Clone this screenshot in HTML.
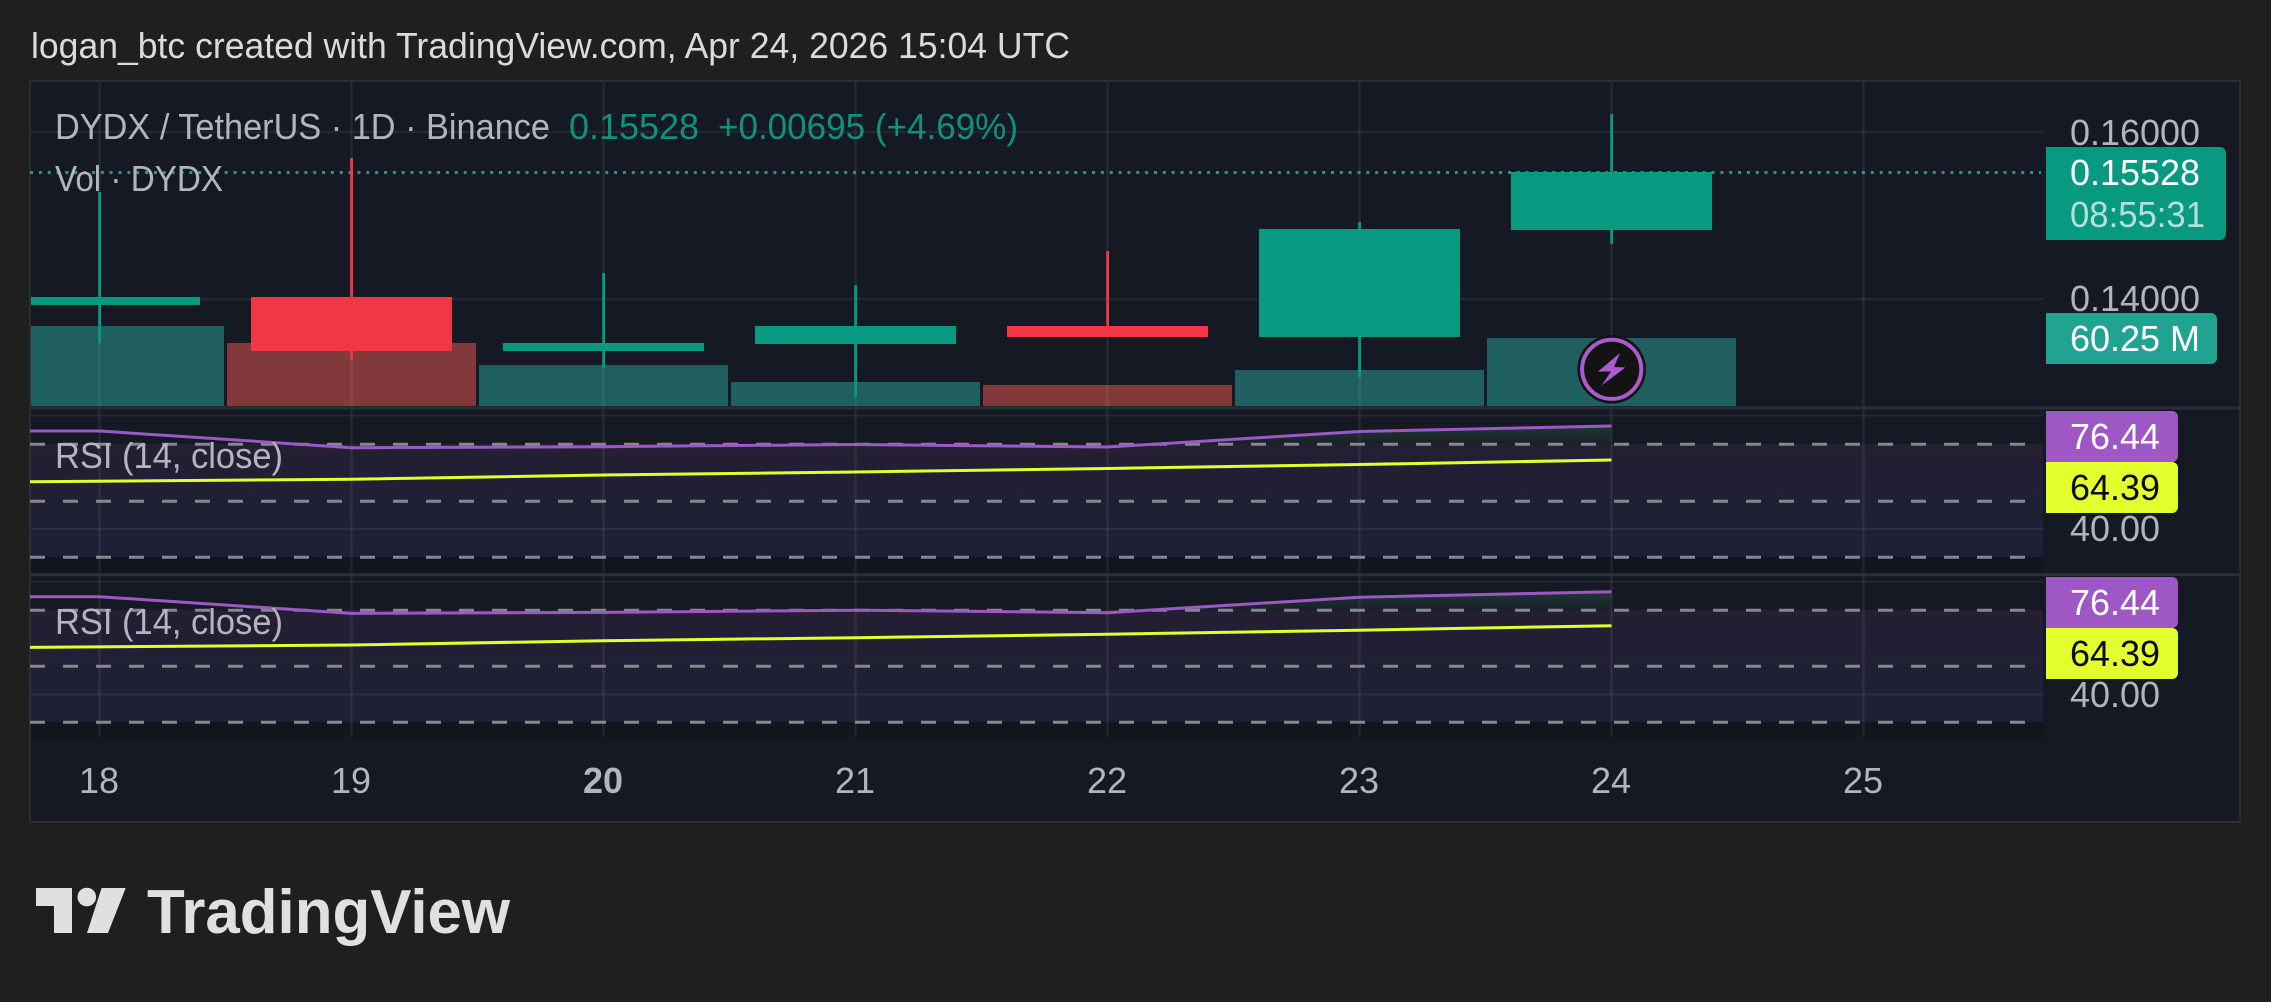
<!DOCTYPE html>
<html><head><meta charset="utf-8"><style>
html,body{margin:0;padding:0;background:#1f1f1f;width:2271px;height:1002px;overflow:hidden}
svg{display:block}
text{font-family:"Liberation Sans",sans-serif;font-size:36px}
</style></head><body>
<svg width="2271" height="1002" viewBox="0 0 2271 1002" xmlns="http://www.w3.org/2000/svg">
<defs>
<linearGradient id="band" x1="0" y1="0" x2="0" y2="1"><stop offset="0" stop-color="#241f33"/><stop offset="1" stop-color="#1d2035"/></linearGradient>
<linearGradient id="ob" x1="0" y1="0" x2="0" y2="1"><stop offset="0" stop-color="#26493f" stop-opacity=".6"/><stop offset="1" stop-color="#26493f" stop-opacity=".1"/></linearGradient>
<clipPath id="p1"><rect x="2040" y="410" width="200" height="60"/></clipPath>
<clipPath id="p2"><rect x="2040" y="576" width="200" height="60"/></clipPath>
</defs>
<rect width="2271" height="1002" fill="#1f1f1f"/>
<text x="31" y="58" fill="#dadbde" textLength="1039" lengthAdjust="spacingAndGlyphs">logan_btc created with TradingView.com, Apr 24, 2026 15:04 UTC</text>

<!-- chart -->
<rect x="30" y="81" width="2210" height="741" fill="#151923" stroke="#2b2d33" stroke-width="2"/>

<!-- rsi bands -->
<rect x="31" y="444" width="2012" height="113" fill="url(#band)"/>
<rect x="31" y="610" width="2012" height="112" fill="url(#band)"/>
<rect x="31" y="557" width="2012" height="17" fill="#12151e"/>
<rect x="31" y="722" width="2012" height="16" fill="#12151e"/>

<!-- volume -->
<g fill="#1f5f5f">
<rect x="31" y="326" width="193" height="80"/>
<rect x="479" y="365" width="249" height="41"/>
<rect x="731" y="382" width="249" height="24"/>
<rect x="1235" y="370" width="249" height="36"/>
<rect x="1487" y="338" width="249" height="68"/>
</g>
<g fill="#82393c">
<rect x="227" y="343" width="249" height="63"/>
<rect x="983" y="385" width="249" height="21"/>
</g>

<!-- horizontal grid -->
<g stroke="#fff" stroke-opacity=".06" stroke-width="2.5">
<path d="M31 132H2043M31 299H2043"/>
<path d="M31 415.5H2043M31 529H2043M31 581.5H2043M31 694.5H2043" stroke-width="2"/>
</g>
<!-- vertical grid -->
<g stroke="#fff" stroke-opacity=".07" stroke-width="2.4">
<path d="M99.5 82V737M351.5 82V737M603.5 82V737M855.5 82V737M1107.5 82V737M1359.5 82V737M1611.5 82V737M1863.5 82V737"/>
</g>

<!-- separators -->
<path d="M31 408H2240M31 574.5H2240" stroke="#2b2e38" stroke-width="3"/>

<!-- dotted price line -->
<path d="M30 172.5H2041" stroke="#1f9a86" stroke-width="3" stroke-dasharray="3 5.85"/>

<!-- candles -->
<g fill="#089981">
<rect x="98.2" y="192" width="2.8" height="151"/>
<rect x="31" y="297" width="169" height="8"/>
<rect x="602.2" y="273" width="2.8" height="95"/>
<rect x="503" y="343" width="201" height="8"/>
<rect x="854.2" y="285" width="2.8" height="112"/>
<rect x="755" y="326" width="201" height="18"/>
<rect x="1358.2" y="222" width="2.8" height="156"/>
<rect x="1259" y="229" width="201" height="108"/>
<rect x="1610.2" y="114" width="2.8" height="130"/>
<rect x="1511" y="172" width="201" height="58"/>
</g>
<g fill="#f23645">
<rect x="350.2" y="158" width="2.8" height="202"/>
<rect x="251" y="297" width="201" height="54"/>
<rect x="1106.2" y="251" width="2.8" height="86"/>
<rect x="1007" y="326" width="201" height="11"/>
</g>

<!-- bolt -->
<circle cx="1611.7" cy="369.3" r="34.3" fill="#131313"/>
<circle cx="1611.7" cy="369.3" r="29.6" fill="#131313" stroke="#ab5bcf" stroke-width="4"/>
<path d="M1620 353L1598 371.5H1611L1601.5 385.5L1625.5 367.5L1614 367Z" fill="#ab5bcf"/>

<!-- RSI pane 1 -->
<path d="M1107.5 447L1359.5 431.5L1611.5 426V444H1107.5Z" fill="url(#ob)"/>
<path d="M30 444.3H2025M30 501.3H2025M30 557.3H2025" stroke="#858791" stroke-width="3" stroke-dasharray="15 18"/>
<path d="M30 431H99.5L351.5 447.7L603.5 446.7L855.5 444.5L1107.5 447L1359.5 431.5L1611.5 426" fill="none" stroke="#9c58c4" stroke-width="3"/>
<path d="M30 481.7L351.5 479.3L603.5 475L855.5 472L1107.5 468.5L1359.5 464.5L1611.5 460" fill="none" stroke="#e3ff2e" stroke-width="3"/>

<!-- RSI pane 2 -->
<path d="M1107.5 613L1359.5 597.5L1611.5 592V610H1107.5Z" fill="url(#ob)"/>
<path d="M30 610.3H2025M30 666.3H2025M30 722.3H2025" stroke="#858791" stroke-width="3" stroke-dasharray="15 18"/>
<path d="M30 596.7H99.5L351.5 613.4L603.5 612.4L855.5 610.2L1107.5 612.7L1359.5 597.2L1611.5 591.7" fill="none" stroke="#9c58c4" stroke-width="3"/>
<path d="M30 647.4L351.5 645L603.5 640.7L855.5 637.7L1107.5 634.2L1359.5 630.2L1611.5 625.7" fill="none" stroke="#e3ff2e" stroke-width="3"/>

<!-- legends -->
<g fill="#b2b5be">
<text x="55" y="139" textLength="495" lengthAdjust="spacingAndGlyphs">DYDX / TetherUS · 1D · Binance</text>
<text x="55" y="191" textLength="168" lengthAdjust="spacingAndGlyphs">Vol · DYDX</text>
<text x="55" y="468" textLength="228" lengthAdjust="spacingAndGlyphs">RSI (14, close)</text>
<text x="55" y="634" textLength="228" lengthAdjust="spacingAndGlyphs">RSI (14, close)</text>
</g>
<g fill="#10917b">
<text x="569" y="139" textLength="130" lengthAdjust="spacingAndGlyphs">0.15528</text>
<text x="718" y="139" textLength="300" lengthAdjust="spacingAndGlyphs">+0.00695 (+4.69%)</text>
</g>

<!-- price axis -->
<g fill="#b2b5be">
<text x="2070" y="145" textLength="130" lengthAdjust="spacingAndGlyphs">0.16000</text>
<text x="2070" y="311" textLength="130" lengthAdjust="spacingAndGlyphs">0.14000</text>
<text x="2070" y="438" clip-path="url(#p1)" fill="#d0d2d8" textLength="90" lengthAdjust="spacingAndGlyphs">80.00</text>
<text x="2070" y="604" clip-path="url(#p2)" fill="#d0d2d8" textLength="90" lengthAdjust="spacingAndGlyphs">80.00</text>
<text x="2070" y="541" textLength="90" lengthAdjust="spacingAndGlyphs">40.00</text>
<text x="2070" y="707" textLength="90" lengthAdjust="spacingAndGlyphs">40.00</text>
</g>

<!-- labels -->
<path d="M2046 147H2220a6 6 0 0 1 6 6V234a6 6 0 0 1 -6 6H2046Z" fill="#089981"/>
<text x="2070" y="185" fill="#fff" textLength="130" lengthAdjust="spacingAndGlyphs">0.15528</text>
<text x="2070" y="227" fill="#b5e0d9" textLength="135" lengthAdjust="spacingAndGlyphs">08:55:31</text>
<path d="M2046 313H2211a6 6 0 0 1 6 6V358a6 6 0 0 1 -6 6H2046Z" fill="#22a392"/>
<text x="2070" y="351" fill="#fff" textLength="130" lengthAdjust="spacingAndGlyphs">60.25 M</text>

<path d="M2046 411H2172a6 6 0 0 1 6 6V456a6 6 0 0 1 -6 6H2046Z" fill="#9f57c5"/>
<text x="2070" y="449" fill="#fff" textLength="90" lengthAdjust="spacingAndGlyphs">76.44</text>
<path d="M2046 462H2172a6 6 0 0 1 6 6V507a6 6 0 0 1 -6 6H2046Z" fill="#e3ff2e"/>
<text x="2070" y="500" fill="#0a0a0a" textLength="90" lengthAdjust="spacingAndGlyphs">64.39</text>

<path d="M2046 577H2172a6 6 0 0 1 6 6V622a6 6 0 0 1 -6 6H2046Z" fill="#9f57c5"/>
<text x="2070" y="615" fill="#fff" textLength="90" lengthAdjust="spacingAndGlyphs">76.44</text>
<path d="M2046 628H2172a6 6 0 0 1 6 6V673a6 6 0 0 1 -6 6H2046Z" fill="#e3ff2e"/>
<text x="2070" y="666" fill="#0a0a0a" textLength="90" lengthAdjust="spacingAndGlyphs">64.39</text>

<!-- time axis -->
<g fill="#b2b5be" text-anchor="middle">
<text x="99" y="793">18</text>
<text x="351" y="793">19</text>
<text x="603" y="793" font-weight="bold">20</text>
<text x="855" y="793">21</text>
<text x="1107" y="793">22</text>
<text x="1359" y="793">23</text>
<text x="1611" y="793">24</text>
<text x="1863" y="793">25</text>
</g>

<!-- logo -->
<g fill="#e0e0e0">
<path d="M36 888H72V933H54V906H36Z"/>
<circle cx="86.8" cy="897" r="9.3"/>
<path d="M101.6 888H125.7L108 933H87Z"/>
<text x="147" y="933" style="font-size:62px;font-weight:bold" textLength="363" lengthAdjust="spacingAndGlyphs">TradingView</text>
</g>
</svg>
</body></html>
